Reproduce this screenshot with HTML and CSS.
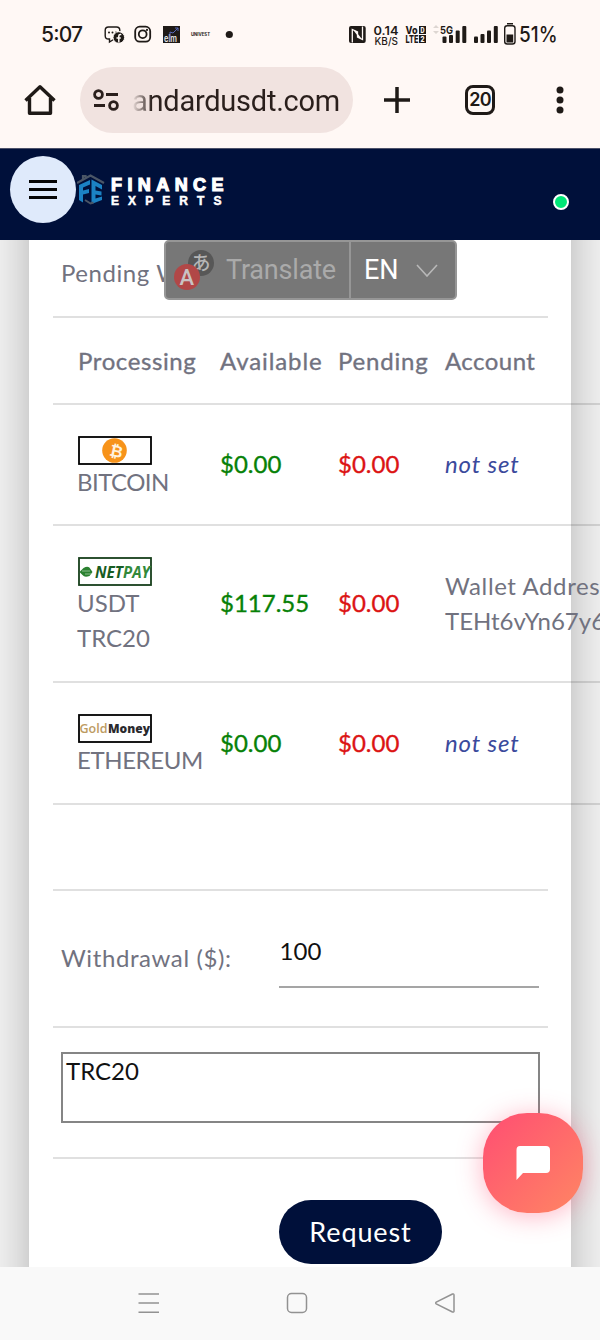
FILE: index.html
```html
<!DOCTYPE html>
<html lang="en">
<head>
<meta charset="utf-8">
<title>Finance Experts</title>
<link rel="stylesheet" href="styles.css">
</head>
<body>
<div class="phone">
  <header class="chrome">
    <div class="status">
      <svg width="600" height="66" viewBox="0 0 600 66">
        <g fill="#1f1a17" font-family="Inter, sans-serif">
          <text class="clock" x="41" y="42" textLength="42">5:07</text>
          <path d="M113.500 39.500l-4 2.500v-3h-1q-3.300 0-3.300-3.300v-5.400q0-3.300 3.300-3.300h8q3.300 0 3.300 3.300v1" fill="none" stroke="#1f1a17" stroke-width="1.400"/>
          <circle cx="109" cy="32.500" r="1"/><circle cx="112.500" cy="32.500" r="1"/><circle cx="116" cy="32.500" r="1"/>
          <circle cx="118.800" cy="37.500" r="5.800" stroke="#fff8f5" stroke-width="1"/>
          <path d="M121.300 34.500h-1q-1.500 0-1.500 1.500v6.500M116.500 38h4.300" stroke="#fff8f5" stroke-width="1.500" fill="none"/>
          <rect x="135.200" y="26.700" width="15" height="15" rx="4.500" fill="none" stroke="#1f1a17" stroke-width="1.800"/>
          <circle cx="142.700" cy="34.200" r="3.900" fill="none" stroke="#1f1a17" stroke-width="1.800"/>
          <circle cx="147" cy="29.900" r="1.100"/>
          <rect x="163" y="26" width="17" height="17"/>
          <text x="164" y="41.500" font-size="10" font-weight="600" fill="#e8e8e8" textLength="13" lengthAdjust="spacingAndGlyphs">elm</text>
          <path d="M170 41v-9l3 1 5-5m-3 0h3v3" stroke="#5868b8" fill="none"/>
          <text x="191" y="36.300" font-size="4.300" font-weight="700" textLength="19">UNIVEST</text>
          <circle cx="229.300" cy="34.500" r="3.600"/>
          <rect x="349" y="26" width="16.700" height="17" rx="2"/>
          <path d="M352.300 42.500V29.500l5.200 2.500v5.500M362.500 26.500v13l-5-2.500v-5.500M354.500 30.500l6 8" fill="none" stroke="#fff8f5" stroke-width="1.300"/>
          <text x="373.500" y="35" font-size="12" font-weight="600" textLength="25" lengthAdjust="spacingAndGlyphs">0.14</text>
          <text x="374.500" y="45" font-size="10.500" font-weight="500" textLength="23.500" lengthAdjust="spacingAndGlyphs">KB/S</text>
          <text x="405.500" y="34" font-size="10.500" font-weight="800" textLength="12" lengthAdjust="spacingAndGlyphs">Vo</text>
          <text x="405.500" y="43" font-size="10.500" font-weight="800" textLength="13" lengthAdjust="spacingAndGlyphs">LTE</text>
          <rect x="419" y="26" width="7" height="8"/><rect x="419" y="35" width="7" height="8"/>
          <text x="420.500" y="33" font-size="7.500" font-weight="800" fill="#fff8f5" textLength="4" lengthAdjust="spacingAndGlyphs">D</text>
          <text x="420.500" y="42" font-size="7.500" font-weight="800" fill="#fff8f5" textLength="4" lengthAdjust="spacingAndGlyphs">2</text>
          <path d="M433 28l3-3 3 3zM433 31l3 3 3-3z" fill="#ddd6d2"/>
          <text x="440" y="33.500" font-size="11" font-weight="700" textLength="13" lengthAdjust="spacingAndGlyphs">5G</text>
          <g><rect x="442.500" y="36.500" width="4" height="6.500" rx="1"/><rect x="449" y="35" width="4" height="8" rx="1"/><rect x="455.700" y="30.500" width="4" height="12.500" rx="1"/><rect x="462.300" y="26" width="4" height="17" rx="1"/></g>
          <g><rect x="474" y="36.500" width="4" height="6.500" rx="1"/><rect x="480.500" y="34" width="4" height="9" rx="1"/><rect x="487" y="30.500" width="4" height="12.500" rx="1"/><rect x="493.800" y="26" width="4" height="17" rx="1"/></g>
          <rect x="504.700" y="25.700" width="10.300" height="18.300" rx="2.500" fill="none" stroke="#1f1a17" stroke-width="1.400"/>
          <rect x="507" y="23" width="6" height="1.500"/><rect x="506.500" y="34.500" width="6.700" height="8"/>
          <text class="clock" x="519" y="42" textLength="38.500" lengthAdjust="spacingAndGlyphs">51%</text>
        </g>
      </svg>
    </div>
    <div class="toolbar">
      <svg class="home" width="32" height="32" viewBox="0 0 32 32" fill="none" stroke="#1f1a17" stroke-width="3.400" stroke-linejoin="round"><path d="M1.500 16.500L16 2.800l14.500 13.700M5.500 14v15.300h21V14"/></svg>
      <div class="urlbar">
        <svg width="26" height="22" viewBox="0 0 26 22" fill="none" stroke="#2a1f1c" stroke-width="2.800"><circle cx="5.500" cy="5.500" r="3.900"/><path d="M13 5.500h12M1 16.500h11"/><circle cx="20.500" cy="16.500" r="3.900"/></svg>
        <span class="url">andardusdt.com</span>
      </div>
      <svg class="plus" width="28" height="28" viewBox="0 0 28 28" stroke="#1f1a17" stroke-width="3.500"><path d="M14 1v26M1 14h26"/></svg>
      <span class="tabs">20</span>
      <svg class="dots" width="8" height="28" viewBox="0 0 8 28" fill="#1f1a17"><circle cx="4" cy="4" r="3.500"/><circle cx="4" cy="14" r="3.500"/><circle cx="4" cy="24" r="3.500"/></svg>
    </div>
  </header>

  <div class="sitebar">
    <div class="burger"><span></span><span></span><span></span></div>
    <svg class="logo" width="150" height="40" viewBox="0 0 150 40">
      <path d="M0 13L13.500 5.500 27 13M6 9V6h2.500v3" fill="none" stroke="#4b5666" stroke-width="2.200"/>
      <path d="M2 15l11-5v4.500L6 17.500v3l6-1.500v4L6 24.500v8l-4-2.500z" fill="#1b82c4"/>
      <path d="M14.500 9.500L25 15v4.500L18.500 16v4.500l6 1v4l-6-1v4l6.500-2v3.500L14.500 34z" fill="#1b82c4"/>
      <path d="M8 30l5.500 3.500 3-1" fill="none" stroke="#4b5666" stroke-width="2"/>
      <text class="brand" x="34" y="20.500" font-size="18" textLength="112.500">FINANCE</text>
      <text class="brand minor" x="34" y="35.300" font-size="12" textLength="110.500">EXPERTS</text>
    </svg>
    <span class="online"></span>
  </div>

  <main class="page">
    <section class="card">
      <div class="row pendingrow">Pending W</div>
      <div class="wallets">
        <div class="line head"><span class="w-proc">Processing</span><span class="w-avail">Available</span><span class="w-pend">Pending</span><span class="w-acc">Account</span></div>
        <div class="line btc">
          <div class="coin"><svg class="pic" width="74" height="29" viewBox="0 0 74 29"><rect x="1" y="1" width="72" height="27" fill="#fff" stroke="#000" stroke-width="1.800"/><circle cx="36.500" cy="14.500" r="12.300" fill="#f7931a"/><text x="32" y="20.500" font-family="Liberation Sans, sans-serif" font-size="16" font-weight="700" fill="#fff3e0" transform="rotate(13 36.500 14.500)">₿</text></svg><span class="w-btc">BITCOIN</span></div>
          <b class="avail">$0.00</b><b class="pend">$0.00</b><i>not set</i>
        </div>
        <div class="line usdt">
          <div class="coin"><svg class="pic" width="74" height="29" viewBox="0 0 74 29"><rect x="1" y="1" width="72" height="27" fill="#fff" stroke="#173f1b" stroke-width="1.800"/><path d="M1.500 15l4-4q5-3 7 1l2 3-3 4q-5 2-7-1z" fill="#2b8130"/><path d="M4 14h8M7 17h6" stroke="#8dbd8e"/><g font-family="Open Sans, sans-serif" font-size="16" font-weight="700" font-style="italic"><text x="17" y="20.500" fill="#175c22" textLength="28" lengthAdjust="spacingAndGlyphs">NET</text><text x="45" y="20.500" fill="#32893a" textLength="27" lengthAdjust="spacingAndGlyphs">PAY</text></g></svg><span>USDT</span><span>TRC20</span></div>
          <b class="avail">$117.55</b><b class="pend">$0.00</b><div class="addr"><span class="w-wallet">Wallet Addres</span><span class="w-hash">TEHt6vYn67y6</span></div>
        </div>
        <div class="line eth">
          <div class="coin"><svg class="pic" width="74" height="29" viewBox="0 0 74 29"><rect x="1" y="1" width="72" height="27" fill="#fff" stroke="#000" stroke-width="1.800"/><g font-family="Open Sans, sans-serif" font-size="12.500" font-weight="600"><text x="1.500" y="19" fill="#bd9b62" textLength="28" lengthAdjust="spacingAndGlyphs">Gold</text><text x="30" y="19" fill="#29292d" font-weight="800" textLength="42" lengthAdjust="spacingAndGlyphs">Money</text></g></svg><span class="w-eth">ETHEREUM</span></div>
          <b class="avail">$0.00</b><b class="pend">$0.00</b><i>not set</i>
        </div>
      </div>
      <div class="row blank"></div>
      <div class="row amount"><label>Withdrawal ($):</label><div class="field">100</div></div>
      <div class="row note"><div class="area">TRC20</div></div>
      <div class="submit"><div class="request">Request</div></div>
    </section>

    <div class="translate">
      <div class="tr-main">
        <svg width="42" height="42" viewBox="0 0 42 42"><circle cx="27" cy="14" r="13" fill="#575757"/><text x="17.500" y="20.500" font-family="Noto Sans CJK JP, sans-serif" font-size="19" font-weight="500" fill="#b5b5b5">あ</text><circle cx="13" cy="28" r="13" fill="#b14747"/><text x="5.500" y="35.500" font-family="Roboto, sans-serif" font-size="22" font-weight="500" fill="#c9c3c3">A</text></svg>
        <span>Translate</span>
      </div>
      <div class="tr-lang"><span>EN</span><svg width="22" height="13" viewBox="0 0 22 13" fill="none" stroke="#b8b8b8" stroke-width="1.600"><path d="M1 1l10 11L21 1"/></svg></div>
    </div>

    <div class="chat"><svg width="34" height="34" viewBox="0 0 34 34" fill="#fff"><path d="M4 0h26q4 0 4 4v19q0 4-4 4H7l-6.500 7V4q0-4 3.500-4z"/></svg></div>
  </main>

  <nav class="sysnav">
    <svg width="22" height="22" viewBox="0 0 22 22" stroke="#929292" stroke-width="1.600"><path d="M.5 2h20.500M.5 11h20.500M.5 20.200h20.500"/></svg>
    <svg width="22" height="22" viewBox="0 0 22 22" fill="none" stroke="#929292" stroke-width="1.500"><rect x="1.500" y="1.500" width="19" height="19" rx="4"/></svg>
    <svg width="22" height="22" viewBox="0 0 22 22" fill="none" stroke="#929292" stroke-width="1.500" stroke-linejoin="round"><path d="M2.200 10.200L18.500 2q1.500-.5 1.500 1v16q0 1.500-1.500 1L2.200 11.800q-1-.8 0-1.600z"/></svg>
  </nav>
</div>
</body>
</html>
```

FILE: styles.css
```css
* { box-sizing: border-box; }
body { margin: 0; }
svg { display: block; flex: none; }

.phone {
  width: 600px;
  height: 1340px;
  display: flex;
  flex-direction: column;
  overflow: hidden;
  font-family: Lato, sans-serif;
  background: #fff8f5;
}

/* browser chrome */
.chrome { height: 148px; }
.status { height: 66px; }
.clock { font-size: 21px; font-weight: 450; }
.toolbar { display: flex; align-items: center; height: 68px; padding-left: 24px; }
.urlbar {
  width: 273px;
  height: 66px;
  margin-left: 24px;
  padding-left: 13px;
  display: flex;
  align-items: center;
  border-radius: 33px;
  background: #f1e3e0;
}
.url {
  margin: 2px 0 0 13px;
  font: 29px/40px Roboto, sans-serif;
  letter-spacing: -0.25px;
  color: transparent;
  background: linear-gradient(90deg, #f1e3e0, #2a1f1c 20px);
  background-clip: text;
  -webkit-background-clip: text;
  white-space: nowrap;
}
.plus { margin-left: 30px; }
.tabs {
  width: 30px;
  height: 30px;
  margin-left: 54px;
  border: 3px solid #1f1a17;
  border-radius: 8px;
  font: 600 18px/24px Inter, sans-serif;
  letter-spacing: -0.8px;
  text-align: center;
  color: #1f1a17;
}
.dots { margin-left: 61px; }

/* site header */
.sitebar {
  height: 92px;
  display: flex;
  align-items: flex-start;
  padding: 7px 0 0 10px;
  background: #00103a;
  border-top: 1px solid #4c5169;
}
.burger {
  width: 66px;
  height: 67px;
  display: flex;
  flex-direction: column;
  align-items: center;
  justify-content: center;
  gap: 5px;
  border-radius: 50%;
  background: #dfeafb;
}
.burger span { width: 28px; height: 3px; background: #050505; }
.logo { margin: 14px 0 0 1px; }
.brand { font-family: "Liberation Sans", sans-serif; font-weight: 700; fill: #fff; stroke: #fff; stroke-width: 1.2px; }
.minor { stroke-width: 0.5px; }
.online {
  width: 16px;
  height: 16px;
  margin: 38px 0 0 326px;
  border: 2px solid #fff;
  border-radius: 50%;
  background: #00e676;
}

/* page area */
.page {
  position: relative;
  height: 1027px;
  overflow: hidden;
  background: #f2f2f2;
}
.card {
  width: 542px;
  height: 1240px;
  margin: -60px 0 0 29px;
  padding: 60px 23px 0 24px;
  background: #fff;
  box-shadow: 0 0 42px rgba(0, 0, 0, 0.27);
  color: #71727f;
  font-size: 24px;
  line-height: 35px;
  white-space: nowrap;
}
.row, .line { border-bottom: 2px solid rgba(0, 0, 0, 0.12); }
.pendingrow { height: 78px; padding: 15px 0 0 8px; letter-spacing: 0.55px; }
.wallets { width: 700px; }
.line {
  display: grid;
  grid-template-columns: 142px 118px 107px 300px;
  align-items: center;
  padding-left: 25px;
}
.head { height: 87px; padding-bottom: 1px; -webkit-text-stroke: 0.35px #71727f; }
.w-proc { letter-spacing: 0.6px; }
.w-avail { letter-spacing: 0.9px; }
.w-pend { letter-spacing: 0.8px; }
.w-acc { letter-spacing: 0.45px; }
.btc { height: 121px; }
.usdt { height: 157px; }
.eth { height: 122px; }
.line > b, .line > i, .addr { position: relative; top: -1px; }
.coin, .addr { display: flex; flex-direction: column; align-items: flex-start; }
.coin { padding-top: 4px; }
.coin span { margin-left: -1px; }
.pic { margin: 1px 0 -1px -0.5px; }
.w-btc { letter-spacing: -0.55px; }
.w-eth { letter-spacing: -0.4px; }
.w-wallet { letter-spacing: 0.6px; }
.line b { font-weight: 400; -webkit-text-stroke: 0.35px currentColor; }
.avail { color: #078107; }
.pend { color: #dc1414; }
.line i { color: #3b4a9c; letter-spacing: 0.85px; }
.blank { height: 86px; }
.amount { height: 137px; display: flex; padding: 50px 9px 0 8px; }
.amount label { width: 218px; margin-top: -1px; letter-spacing: 0.6px; }
.field {
  width: 261px;
  height: 48px;
  margin-top: -1px;
  padding-left: 1px;
  line-height: 22px;
  border-bottom: 2px solid #a5a5a5;
  color: #111;
}
.note { height: 131px; padding: 24px 8px 0; }
.area {
  height: 71px;
  padding-left: 3px;
  border: 2px solid #858585;
  line-height: 33px;
  color: #111;
}
.submit { padding: 41px 0 0 226px; }
.request {
  width: 163px;
  height: 64px;
  border-radius: 32px;
  background: #00103a;
  color: #fff;
  font-size: 27px;
  line-height: 63px;
  letter-spacing: 0.9px;
  text-align: center;
}

/* floating translate control */
.translate {
  position: absolute;
  left: 164px;
  top: 0;
  width: 293px;
  height: 60px;
  display: flex;
  border: 2px solid #969696;
  border-radius: 5px;
  background: #777;
  font: 27px/56px Roboto, sans-serif;
}
.tr-main { width: 185px; display: flex; padding: 7px 0 0 8px; border-right: 2px solid #969696; color: #aaa; }
.tr-main span { margin: -7px 0 0 10px; letter-spacing: -0.2px; }
.tr-lang { display: flex; align-items: center; padding-left: 13px; color: #fff; gap: 17px; }

/* floating chat button */
.chat {
  position: absolute;
  left: 483px;
  top: 873px;
  width: 100px;
  height: 100px;
  display: grid;
  place-items: center;
  border-radius: 44px;
  background: linear-gradient(135deg, #ff5371 10%, #ff8364 95%);
  box-shadow: 0 3px 26px rgba(255, 70, 110, 0.4);
}

.sysnav {
  height: 73px;
  display: flex;
  align-items: center;
  gap: 126px;
  padding: 0 0 1px 138px;
  background: #f9f9f9;
}
```
